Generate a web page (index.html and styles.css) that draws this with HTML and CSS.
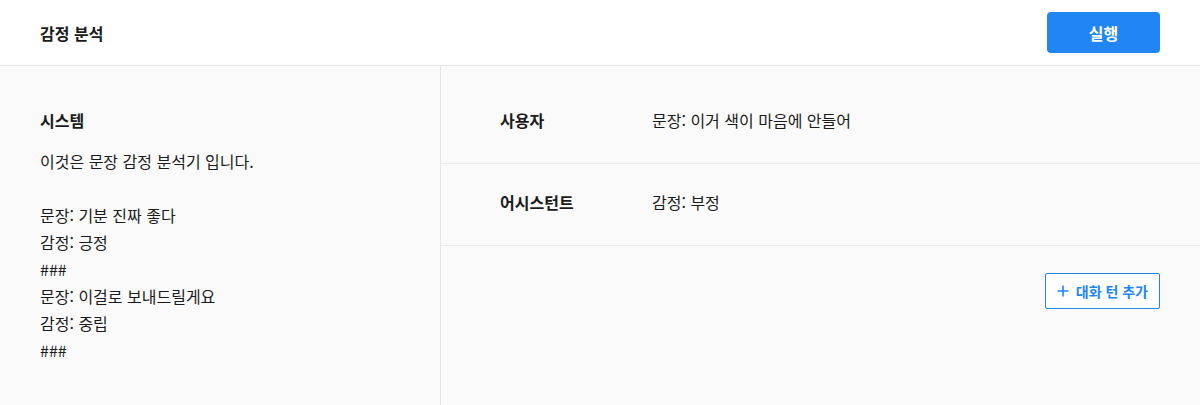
FILE: index.html
```html
<!DOCTYPE html>
<html lang="ko">
<head>
    <meta charset="UTF-8">
    <meta name="viewport" content="width=device-width, initial-scale=1.0">
    <title>감정 분석</title>
    <link rel="stylesheet" href="styles.css">
</head>
<body>
    <header class="header">
        <h1>감정 분석</h1>
        <button type="button" class="run-btn">실행</button>
    </header>
    <main class="workspace">
        <section class="system-panel">
            <h2>시스템</h2>
            <p class="system-text">이것은 문장 감정 분석기 입니다.

문장: 기분 진짜 좋다
감정: 긍정
###
문장: 이걸로 보내드릴게요
감정: 중립
###</p>
        </section>
        <section class="chat-panel">
            <div class="turn">
                <div class="role">사용자</div>
                <div class="message">문장: 이거 색이 마음에 안들어</div>
            </div>
            <div class="turn">
                <div class="role">어시스턴트</div>
                <div class="message">감정: 부정</div>
            </div>
            <div class="actions">
                <button type="button" class="add-btn">
                    <svg width="12" height="12" viewBox="0 0 12 12" aria-hidden="true">
                        <path d="M6 0.5v11M0.5 6h11" stroke="currentColor" stroke-width="1.6" fill="none"/>
                    </svg>
                    대화 턴 추가
                </button>
            </div>
        </section>
    </main>
</body>
</html>
```

FILE: styles.css
```css
body {
    margin: 0;
    font-family: "Noto Sans CJK KR", "Noto Sans", sans-serif;
    color: #1a1a1a;
    background-color: #fafafa;
}

.header {
    display: flex;
    justify-content: space-between;
    align-items: center;
    height: 65px;
    padding: 0 40px;
    background-color: #fff;
    border-bottom: 1px solid #e6e6e6;
}

.header h1 {
    margin: 0;
    font-size: 16px;
    font-weight: 700;
}

.run-btn {
    width: 113px;
    height: 41px;
    border: none;
    border-radius: 4px;
    background-color: #2186f4;
    color: #fff;
    font-family: inherit;
    font-size: 16px;
    font-weight: 700;
    cursor: pointer;
}

.workspace {
    display: flex;
    height: 339px;
}

.system-panel {
    width: 400px;
    padding: 42px 0 0 40px;
    border-right: 1px solid #e6e6e6;
}

.system-panel h2 {
    margin: 0;
    font-size: 16px;
    font-weight: 700;
    line-height: 24px;
}

.system-text {
    margin: 16px 0 0;
    font-size: 16px;
    line-height: 27px;
    white-space: pre-line;
}

.chat-panel {
    flex: 1;
    padding-top: 16px;
}

.turn {
    display: flex;
    align-items: center;
    padding: 26px 0 31px 59px;
    border-bottom: 1px solid #e9e9e9;
    font-size: 16px;
    line-height: 24px;
}

.role {
    width: 152px;
    font-weight: 700;
}

.actions {
    display: flex;
    justify-content: flex-end;
    padding: 27px 40px 0 0;
}

.add-btn {
    display: flex;
    align-items: center;
    gap: 7px;
    height: 36px;
    padding: 0 11px 0 11px;
    border: 1px solid #2186f4;
    border-radius: 2px;
    background-color: #fff;
    color: #2186f4;
    font-family: inherit;
    font-size: 14px;
    font-weight: 700;
    cursor: pointer;
}
```
